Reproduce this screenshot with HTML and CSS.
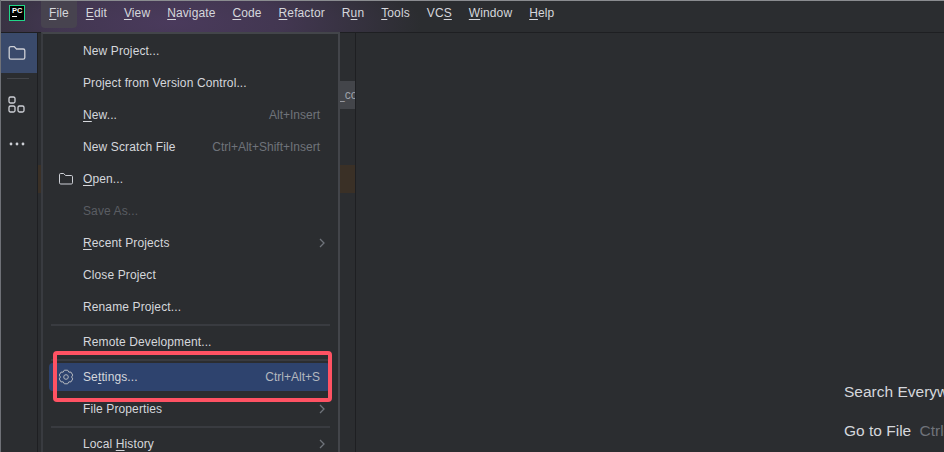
FILE: index.html
```html
<!DOCTYPE html>
<html lang="en">
<head>
<meta charset="utf-8">
<title>PyCharm</title>
<link rel="stylesheet" href="styles.css">
</head>
<body>
<div class="window">
  <header class="titlebar">
    <div class="logo"><span class="logo-text">PC</span><span class="logo-bar"></span></div>
    <nav class="menubar">
      <span class="top active"><u>F</u>ile</span>
      <span class="top"><u>E</u>dit</span>
      <span class="top"><u>V</u>iew</span>
      <span class="top"><u>N</u>avigate</span>
      <span class="top"><u>C</u>ode</span>
      <span class="top"><u>R</u>efactor</span>
      <span class="top">R<u>u</u>n</span>
      <span class="top"><u>T</u>ools</span>
      <span class="top">VC<u>S</u></span>
      <span class="top"><u>W</u>indow</span>
      <span class="top"><u>H</u>elp</span>
    </nav>
  </header>
  <div class="body">
    <aside class="stripe">
      <div class="stripe-btn selected">
        <svg width="20" height="20" viewBox="0 0 20 20" fill="none" stroke="#ced0d6" stroke-width="1.3"><path d="M2.2 5.2a1.6 1.6 0 0 1 1.6-1.6h3.4l2.3 2.4h6.7a1.6 1.6 0 0 1 1.6 1.6v7a1.6 1.6 0 0 1-1.6 1.6H3.8a1.6 1.6 0 0 1-1.6-1.6z"/></svg>
      </div>
      <div class="stripe-sep"></div>
      <div class="stripe-btn">
        <svg width="18" height="18" viewBox="0 0 18 18" fill="none" stroke="#ced0d6" stroke-width="1.3"><rect x="1" y="2" width="6" height="6" rx="1.5"/><rect x="1" y="11" width="6" height="6" rx="1.5"/><rect x="10" y="11" width="6" height="6" rx="1.5"/></svg>
      </div>
      <div class="stripe-btn more">
        <svg width="18" height="6" viewBox="0 0 18 6" fill="#ced0d6"><circle cx="3" cy="3" r="1.4"/><circle cx="9" cy="3" r="1.4"/><circle cx="15" cy="3" r="1.4"/></svg>
      </div>
    </aside>
    <section class="project">
      <div class="tab-slot"><span class="tab">_co</span></div>
      <div class="hit-row"></div>
    </section>
    <main class="editor">
      <p class="hint">Search Everywhere</p>
      <p class="hint">Go to File <span class="hint-key">Ctrl+Shift+N</span></p>
    </main>
  </div>

  <div class="menu">
    <div class="item"><span class="label">New Project...</span></div>
    <div class="item"><span class="label">Project from Version Control...</span></div>
    <div class="item"><span class="label"><u>N</u>ew...</span><span class="key">Alt+Insert</span></div>
    <div class="item"><span class="label">New Scratch File</span><span class="key">Ctrl+Alt+Shift+Insert</span></div>
    <div class="item">
      <svg class="icon" width="16" height="16" viewBox="0 0 16 16" fill="none" stroke="#ced0d6" stroke-width="1"><path d="M1.5 3.7a1.2 1.2 0 0 1 1.2-1.2h3l1.8 2h5.8a1.2 1.2 0 0 1 1.2 1.2v6.1a1.2 1.2 0 0 1-1.2 1.2H2.7a1.2 1.2 0 0 1-1.2-1.2z"/></svg>
      <span class="label"><u>O</u>pen...</span>
    </div>
    <div class="item disabled"><span class="label">Save As...</span></div>
    <div class="item"><span class="label"><u>R</u>ecent Projects</span><svg class="chevron" width="8" height="10" viewBox="0 0 8 10" fill="none" stroke="#6f737a" stroke-width="1.3"><path d="M2 1l4 4-4 4"/></svg></div>
    <div class="item"><span class="label">Close Project</span></div>
    <div class="item"><span class="label">Rename Project...</span></div>
    <div class="sep"></div>
    <div class="item"><span class="label">Remote Development...</span></div>
    <div class="sep"></div>
    <div class="item selected">
      <svg class="icon" width="16" height="16" viewBox="0 0 16 16" fill="none" stroke="#b4b8bf" stroke-width="1" stroke-linejoin="round"><path d="M6.31 1.21H9.69L10.8 3.15 13.03 3.14 14.73 6.07 13.6 8 14.73 9.93 13.03 12.86 10.8 12.85 9.69 14.79H6.31L5.2 12.85 2.97 12.86 1.27 9.93 2.4 8 1.27 6.07 2.97 3.14 5.2 3.15z"/><circle cx="8" cy="8" r="2.3"/></svg>
      <span class="label">Se<u>t</u>tings...</span><span class="key">Ctrl+Alt+S</span>
    </div>
    <div class="item"><span class="label">File Properties</span><svg class="chevron" width="8" height="10" viewBox="0 0 8 10" fill="none" stroke="#6f737a" stroke-width="1.3"><path d="M2 1l4 4-4 4"/></svg></div>
    <div class="sep"></div>
    <div class="item"><span class="label">Local <u>H</u>istory</span><svg class="chevron" width="8" height="10" viewBox="0 0 8 10" fill="none" stroke="#6f737a" stroke-width="1.3"><path d="M2 1l4 4-4 4"/></svg></div>
  </div>

  <div class="callout"></div>
</div>
</body>
</html>
```
FILE: styles.css
```css
* { box-sizing: border-box; }
html, body { margin: 0; height: 100%; overflow: hidden; }
body { background: #2b2d30; color: #d5d7dc; font: 12px "Liberation Sans", Arial, sans-serif; }
u { text-underline-offset: 2px; text-decoration-thickness: 1px; }

.window { position: relative; width: 944px; height: 452px; display: flex; flex-direction: column; overflow: hidden; border-left: 1px solid #6f7177; }

.titlebar {
  height: 33px; flex: none; display: flex; align-items: flex-start;
  border-top: 1px solid #8a8c90;
  border-bottom: 1px solid #1e1f22;
  background:
    radial-gradient(ellipse 250px 70px at 170px 22px, #4a3a5c 0%, rgba(74,58,92,.75) 45%, rgba(74,58,92,0) 100%),
    #2b2d30;
}
.logo { width: 16px; height: 16px; margin: 4px 0 0 8px; flex: none; background: #000; border: 1px solid #21d789; display: flex; flex-direction: column; padding: 1px 2px; }
.logo-text { font: bold 7.5px/7px "Liberation Sans", sans-serif; color: #fff; }
.logo-bar { width: 5px; height: 1px; margin-top: 2px; background: #fff; }

.menubar { display: flex; margin-left: 15.5px; }
.top { height: 27px; padding: 0 8.5px; line-height: 25px; font-size: 12px; letter-spacing: .11px; color: #d5d7dc; white-space: nowrap; }
.top.active { background: #47434f; border-radius: 0 0 4px 4px; }

.body { flex: 1; display: flex; min-height: 0; }
.stripe { width: 37px; flex: none; display: flex; flex-direction: column; align-items: stretch; border-right: 1px solid #1e1f22; }
.stripe-btn { height: 40px; padding-right: 4px; display: flex; align-items: center; justify-content: center; }
.stripe-btn.selected { background: #3a4a6b; }
.stripe-sep { height: 1px; margin: 5px 8px 5px 6px; background: #43454a; }

.project { width: 318px; flex: none; border-right: 1px solid #1e1f22; background: #2b2d30; display: flex; flex-direction: column; align-items: flex-end; }
.tab-slot { height: 28px; margin-top: 48px; display: flex; }
.tab { width: 17px; height: 28px; background: #43454a; color: #9da0a8; line-height: 29px; overflow: hidden; }
.hit-row { align-self: stretch; height: 28px; margin-top: 56px; background: #3a3026; }

.editor { flex: 1; padding: 348px 0 0 488px; background: #2b2d30; white-space: nowrap; overflow: hidden; }
.hint { margin: 0 0 17px; height: 22px; line-height: 22px; font-size: 15.5px; color: #d5d7dc; }
.hint-key { margin-left: 4px; color: #6f737a; }

.menu {
  position: absolute; left: 40px; top: 32px; width: 299px; height: 440px;
  padding-top: 1px; background: #2b2d30;
  border: 2px solid #43454a; border-left-color: #393b40; border-bottom: 0;
  display: flex; flex-direction: column;
}
.item { position: relative; height: 32px; flex: none; display: flex; align-items: center; justify-content: space-between; padding: 0 18px 0 40px; font-size: 12px; color: #d5d7dc; }
.item .icon { position: absolute; left: 15px; top: 8px; }
.label { white-space: nowrap; letter-spacing: .12px; }
.key { color: #6f737a; white-space: nowrap; }
.chevron { margin-right: -6px; }
.disabled .label { color: #5a5d63; }
.item.selected { height: 28px; margin: 2px 8px 2px 6px; padding: 0 10px 0 34px; background: #2e436e; border-radius: 4px; }
.item.selected .icon { left: 9px; top: 6px; }
.item.selected .key { color: #b4b8bf; }
.sep { height: 2px; margin: 1px 8px 0 8px; background: #393b40; flex: none; }

.callout { position: absolute; left: 52px; top: 351px; width: 279px; height: 51px; border: 4px solid #ff5263; border-radius: 4px; pointer-events: none; }
```
